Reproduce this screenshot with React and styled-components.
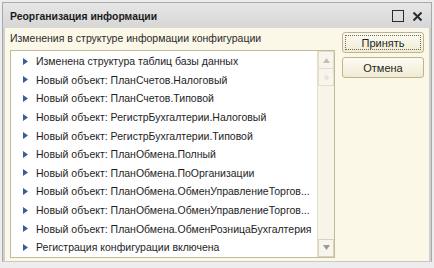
import React from "react";
import styled, { createGlobalStyle } from "styled-components";

const GlobalStyle = createGlobalStyle`
  html, body {
    margin: 0;
    padding: 0;
    background: #ededed;
  }
  body {
    font-family: "Liberation Sans", Arial, sans-serif;
    font-size: 10.5px;
    color: #1a1a1a;
  }
`;

const items = [
  "Изменена структура таблиц базы данных",
  "Новый объект: ПланСчетов.Налоговый",
  "Новый объект: ПланСчетов.Типовой",
  "Новый объект: РегистрБухгалтерии.Налоговый",
  "Новый объект: РегистрБухгалтерии.Типовой",
  "Новый объект: ПланОбмена.Полный",
  "Новый объект: ПланОбмена.ПоОрганизации",
  "Новый объект: ПланОбмена.ОбменУправлениеТоргов...",
  "Новый объект: ПланОбмена.ОбменУправлениеТоргов...",
  "Новый объект: ПланОбмена.ОбменРозницаБухгалтерия",
  "Регистрация конфигурации включена",
];

const App = () => {
  return (
    <>
      <GlobalStyle />
      <Window>
        <TitleBar>
          <Title>Реорганизация информации</Title>
          <TitleIcons>
            <svg width="12" height="12" viewBox="0 0 12 12">
              <rect x="0.5" y="0.5" width="11" height="11" fill="none" stroke="#2b2b2b" strokeWidth="1" />
            </svg>
            <svg width="11" height="11" viewBox="0 0 11 11">
              <path d="M1.5 1.5 L9.5 9.5 M9.5 1.5 L1.5 9.5" stroke="#2b2b2b" strokeWidth="2" />
            </svg>
          </TitleIcons>
        </TitleBar>
        <Body>
          <Main>
            <Label>Изменения в структуре информации конфигурации</Label>
            <ListBox>
              <List>
                {items.map((text, i) => (
                  <Row key={i}>
                    <svg width="5" height="7" viewBox="0 0 5 7">
                      <path d="M0 0 L5 3.5 L0 7 Z" fill="#3c5c98" />
                    </svg>
                    <span>{text}</span>
                  </Row>
                ))}
              </List>
              <ScrollBar>
                <ScrollButton>
                  <svg width="7" height="5" viewBox="0 0 7 5">
                    <path d="M0 5 L3.5 0 L7 5 Z" fill="#c4c1b4" />
                  </svg>
                </ScrollButton>
                <Thumb>
                  <svg width="5" height="5" viewBox="0 0 5 5">
                    <circle cx="2.5" cy="2.5" r="1.6" fill="none" stroke="#d2cfc0" strokeWidth="1" />
                  </svg>
                </Thumb>
                <Track />
                <ScrollButton $bottom>
                  <svg width="7" height="5" viewBox="0 0 7 5">
                    <path d="M0 0 L7 0 L3.5 5 Z" fill="#9a988f" />
                  </svg>
                </ScrollButton>
              </ScrollBar>
            </ListBox>
          </Main>
          <Side>
            <Button $focused>
              <span>Принять</span>
            </Button>
            <Button>
              <span>Отмена</span>
            </Button>
          </Side>
        </Body>
      </Window>
    </>
  );
};

export default App;

const Window = styled.div`
  margin: 2px 0 0 2px;
  width: 428px;
  height: 258px;
  border: 1px solid #a9a9a9;
  background: #fbf8e8;
  display: flex;
  flex-direction: column;
`;

const TitleBar = styled.div`
  height: 25px;
  flex-shrink: 0;
  background: linear-gradient(#e6e6e6, #d6d6d6);
  display: flex;
  align-items: center;
  justify-content: space-between;
  padding: 1px 8px 0 7px;
  box-sizing: border-box;
`;

const Title = styled.div`
  font-weight: bold;
  font-size: 10.4px;
  color: #1c1c1c;
`;

const TitleIcons = styled.div`
  display: flex;
  align-items: center;
  gap: 8px;
`;

const Body = styled.div`
  flex: 1;
  display: flex;
  gap: 7px;
  padding: 4px 5px 3px 5px;
  border-left: 2px solid #cfcfcf;
  border-right: 2px solid #cfcfcf;
  border-bottom: 3px solid #c9c9c9;
`;

const Main = styled.div`
  width: 326px;
  display: flex;
  flex-direction: column;
`;

const Label = styled.div`
  height: 18px;
  line-height: 13px;
  color: #2a2a2a;
`;

const ListBox = styled.div`
  flex: 1;
  display: flex;
  border: 1px solid #c2bc9c;
  background: #ffffff;
`;

const List = styled.div`
  flex: 1;
  padding-top: 1px;
`;

const Row = styled.div`
  height: 18.6px;
  display: flex;
  align-items: center;
  gap: 8px;
  padding-left: 12px;
  white-space: nowrap;
  color: #1e1e1e;
`;

const ScrollBar = styled.div`
  width: 16px;
  display: flex;
  flex-direction: column;
  background: #f7f5ea;
  border-left: 1px solid #e3dfcb;
`;

const ScrollButton = styled.div`
  height: 16px;
  display: flex;
  align-items: center;
  justify-content: center;
  background: #f8f6ec;
  border: 1px solid #e2dec9;
  ${(p) => (p.$bottom ? "border-color: #d8d3ba;" : "")}
`;

const Thumb = styled.div`
  height: 16px;
  display: flex;
  align-items: center;
  justify-content: center;
  background: #f8f6ec;
  border: 1px solid #e2dec9;
  border-top: none;
`;

const Track = styled.div`
  flex: 1;
`;

const Side = styled.div`
  display: flex;
  flex-direction: column;
  gap: 4px;
  padding-top: 0;
`;

const Button = styled.div`
  width: 82px;
  height: 21px;
  box-sizing: border-box;
  border: 1px solid #bdb48e;
  border-radius: 3px;
  background: linear-gradient(#fdfcf3, #efead2);
  display: flex;
  align-items: center;
  justify-content: center;
  padding: 2px;

  span {
    flex: 1;
    align-self: stretch;
    display: flex;
    align-items: center;
    justify-content: center;
    border: 1px dotted ${(p) => (p.$focused ? "#6a6a6a" : "transparent")};
    color: #1e1e1e;
    font-size: 11px;
  }
`;
